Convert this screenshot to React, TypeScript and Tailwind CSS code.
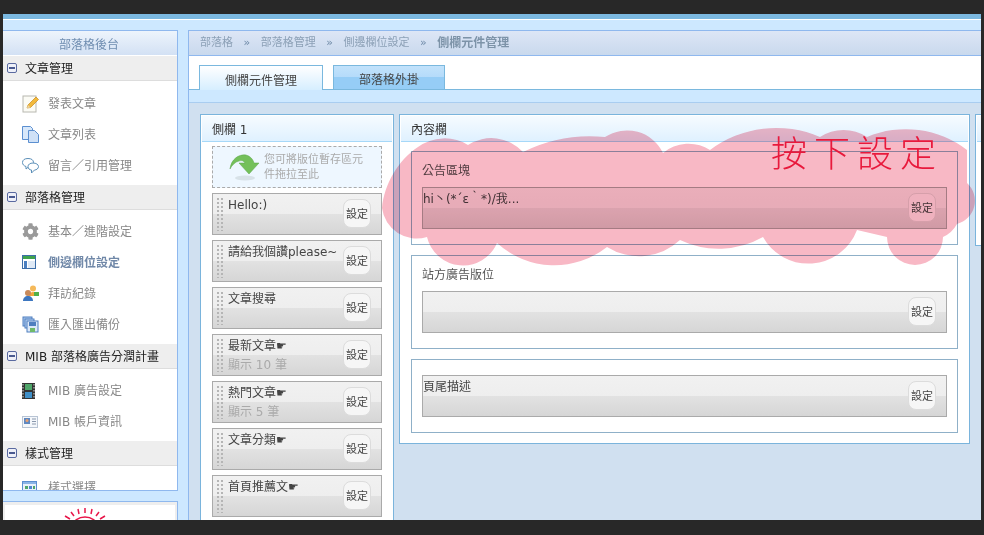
import React from 'react';
import { FaCog } from 'react-icons/fa';

const font = '[font-family:"DejaVu_Sans","Noto_Sans_CJK_TC",sans-serif]';

const PencilIcon = () => (
  <svg width="18" height="18" viewBox="0 0 18 18">
    <rect x="1" y="1" width="13" height="16" fill="#fbfbf5" stroke="#b8b8b0" />
    <path d="M5 13l1-3 8-8 2.500 2.500-8 8z" fill="#f2b93b" stroke="#c98a1c" strokeWidth="0.7" />
    <path d="M5 13l1-3 2.500 2.500z" fill="#e9d5a8" />
  </svg>
);
const DocsIcon = () => (
  <svg width="17" height="17" viewBox="0 0 17 17">
    <path d="M0.500 0.500h8l2 2v11h-10z" fill="#d8e8fa" stroke="#5b8fd0" />
    <path d="M6.500 4.500h6l4 4v8h-10z" fill="#cfe1f7" stroke="#5b8fd0" />
  </svg>
);
const BubblesIcon = () => (
  <svg width="17" height="16" viewBox="0 0 17 16">
    <path d="M0.500 4.500C0.500 2 2.500 0.500 6 0.500s5.500 1.500 5.500 4S9 8.500 7 8.500l-3 2.500V8.500C2 8 0.500 6.500 0.500 4.500z" fill="#fff" stroke="#5b8fb8" />
    <path d="M6 8.500C6 6.500 8 5 11 5s5.500 1.500 5.500 3.500-2 3.500-4 3.500l-3 3v-3C7.500 12 6 10.500 6 8.500z" fill="#fff" stroke="#5b8fb8" />
  </svg>
);
const LayoutIcon = () => (
  <svg width="16" height="16" viewBox="0 0 16 16">
    <rect x="0.500" y="0.500" width="13" height="13" fill="#fff" stroke="#3d6ea8" />
    <rect x="1" y="1" width="12" height="3" fill="#3fa34d" />
    <rect x="2" y="6" width="3" height="7" fill="#4a7fc0" />
    <rect x="6" y="6" width="7" height="7" fill="#dfe9f5" />
  </svg>
);
const UsersIcon = () => (
  <svg width="18" height="18" viewBox="0 0 18 18">
    <circle cx="11" cy="3.500" r="3" fill="#f5b95a" />
    <path d="M7 11c0-3 2-4 4-4s4 1 4 4z" fill="#f0a63c" />
    <circle cx="6" cy="8" r="3" fill="#c98a5a" />
    <path d="M1 16c0-3 2-5 5-5s5 2 5 5z" fill="#3d77c0" />
    <rect x="12" y="7" width="5" height="4" fill="#52b04a" />
  </svg>
);
const BackupIcon = () => (
  <svg width="17" height="17" viewBox="0 0 17 17">
    <rect x="1" y="1" width="9" height="9" fill="#a9c6ec" stroke="#4f7fbf" />
    <rect x="3" y="3" width="9" height="9" fill="#bcd4f2" stroke="#4f7fbf" />
    <rect x="5" y="5" width="11" height="11" fill="#dce9f8" stroke="#4f7fbf" />
    <rect x="7" y="6" width="7" height="4" fill="#4f7fbf" />
    <rect x="8" y="12" width="5" height="4" fill="#6fba6a" />
  </svg>
);
const FilmIcon = () => (
  <svg width="13" height="16" viewBox="0 0 13 16">
    <rect width="13" height="16" fill="#333" />
    <rect x="3" y="1" width="7" height="6" fill="#4fa66a" />
    <rect x="3" y="9" width="7" height="6" fill="#3f8fc8" />
    <path d="M1 1v14M12 1v14" stroke="#ddd" strokeWidth="1" strokeDasharray="1.500 1.500" />
  </svg>
);
const CardIcon = () => (
  <svg width="16" height="12" viewBox="0 0 16 12">
    <rect x="0.500" y="0.500" width="15" height="11" fill="#f4f7fb" stroke="#b8c4d4" />
    <rect x="2" y="2" width="6" height="6" fill="#5f88c0" />
    <circle cx="5" cy="4.500" r="1.500" fill="#e8a070" />
    <path d="M10 3h4M10 5.500h4M10 8h4" stroke="#8a98ac" />
  </svg>
);
const GridIcon = () => (
  <svg width="15" height="14" viewBox="0 0 15 14">
    <rect x="0.500" y="0.500" width="14" height="13" fill="#e8f1fb" stroke="#5b8fd0" />
    <rect x="1" y="1" width="13" height="2" fill="#8ab4e6" />
    <rect x="3" y="5" width="3" height="3" fill="#4fa66a" />
    <rect x="7" y="5" width="3" height="3" fill="#4f86d0" />
    <rect x="11" y="5" width="2" height="3" fill="#4fa66a" />
    <rect x="3" y="9" width="3" height="3" fill="#e0a030" />
    <rect x="7" y="9" width="3" height="3" fill="#4fa66a" />
    <rect x="11" y="9" width="2" height="3" fill="#e0a030" />
  </svg>
);

const menu = [
  {
    title: '文章管理',
    first: true,
    items: [
      { label: '發表文章', icon: <PencilIcon /> },
      { label: '文章列表', icon: <DocsIcon /> },
      { label: '留言／引用管理', icon: <BubblesIcon /> },
    ],
  },
  {
    title: '部落格管理',
    items: [
      { label: '基本／進階設定', icon: <FaCog size={17} color="#9a9a9a" /> },
      { label: '側邊欄位設定', icon: <LayoutIcon />, active: true },
      { label: '拜訪紀錄', icon: <UsersIcon /> },
      { label: '匯入匯出備份', icon: <BackupIcon /> },
    ],
  },
  {
    title: 'MIB 部落格廣告分潤計畫',
    items: [
      { label: 'MIB 廣告設定', icon: <FilmIcon /> },
      { label: 'MIB 帳戶資訊', icon: <CardIcon /> },
    ],
  },
  {
    title: '樣式管理',
    items: [{ label: '樣式選擇', icon: <GridIcon /> }],
  },
];

const sideWidgets = [
  { title: 'Hello:)' },
  { title: '請給我個讚please~' },
  { title: '文章搜尋' },
  { title: '最新文章☛', sub: '顯示 10 筆' },
  { title: '熱門文章☛', sub: '顯示 5 筆' },
  { title: '文章分類☛' },
  { title: '首頁推薦文☛' },
];

const SetButton = () => (
  <div className="ml-auto mt-[5px] flex h-[29px] w-[28px] shrink-0 items-center justify-center rounded-lg border border-[#dcdcdc] bg-[#f6f6f6] pt-[3px] text-[11px] text-[#444]">
    設定
  </div>
);

const Widget = ({ title, sub, grip }: { title: string; sub?: string; grip?: boolean }) => (
  <div className="flex h-[42px] border border-[#aaaaaa] bg-[linear-gradient(#f1f1f1_0,#eeeeee_50%,#e2e2e2_50%,#d6d6d6_100%)] pr-[10px]">
    {grip && (
      <div className="ml-[3px] mt-[3px] h-[34px] w-[8px] shrink-0 bg-[radial-gradient(circle,#b5b5b5_1px,transparent_1px)] bg-[length:4px_4px]" />
    )}
    <div className={grip ? 'ml-[4px] pt-[3px]' : 'pt-[3px]'}>
      <div className="whitespace-nowrap text-[12px] leading-[16px] text-[#444]">{title}</div>
      {sub && <div className="mt-[3px] whitespace-nowrap text-[12px] leading-[16px] text-[#aaaaaa]">{sub}</div>}
    </div>
    <SetButton />
  </div>
);

const ColumnHead = ({ title }: { title: string }) => (
  <div className="mx-px mt-px h-[26px] border-b border-[#a6d8f8] bg-[linear-gradient(#f6fbff,#dff1ff)] pl-[10px] text-[12px] leading-[28px] text-[#333]">
    {title}
  </div>
);

const Crumb = ({ children }: { children: string }) => <span>{children}</span>;

export default function App() {
  return (
    <div className={`relative h-[535px] w-[984px] overflow-hidden bg-[#282828] pl-[3px] pr-[3px] pt-[14px] ${font}`}>
      <div className="flex h-[506px] flex-col overflow-hidden">
        <div className="h-[6px] shrink-0 border-b border-white bg-[#7bb8e0]" />
        <div className="flex min-h-0 flex-1 gap-[10px] bg-[#cde8ff] pt-[10px]">
          {/* left menu */}
          <div className="flex w-[175px] shrink-0 flex-col gap-[10px]">
            <div className="h-[461px] shrink-0 overflow-hidden border-b border-r border-t border-[#8fb8ee] bg-white">
              <div className="h-[24px] bg-[linear-gradient(#edf4fc,#d3e1f4)] pr-[2px] text-center text-[12px] leading-[28px] text-[#6f8db0]">
                部落格後台
              </div>
              {menu.map((group) => (
                <div key={group.title}>
                  <div className={`${group.first ? 'mt-px' : ''} flex h-[25px] items-center border-b border-[#dddddd] bg-[#eeeeee] pl-[4px] pt-[2px] text-[12px] text-[#222]`}>
                    <span className="mb-[2px] mr-[8px] flex h-[10px] w-[10px] items-center justify-center rounded-[2px] border border-[#5a6aa0] bg-[#eef0f8]">
                      <span className="h-[2px] w-[6px] bg-[#4a5a90]" />
                    </span>
                    {group.title}
                  </div>
                  <div className={group.first ? 'pb-[4px] pt-[7px]' : 'pb-[4px] pt-[6px]'}>
                    {group.items.map((item) => (
                      <div key={item.label} className="flex h-[31px] items-center pl-[19px]">
                        <span className="flex w-[26px] shrink-0 items-center">{item.icon}</span>
                        <span className={item.active ? 'text-[12px] font-bold text-[#7088a8]' : 'text-[12px] text-[#888888]'}>
                          {item.label}
                        </span>
                      </div>
                    ))}
                  </div>
                </div>
              ))}
            </div>
            <div className="flex flex-1 justify-center border-r border-t border-[#8fb8ee] bg-[#eeeeee] pt-[3px]">
              <div className="flex w-[170px] justify-center bg-white pr-[10px] pt-[3px]">
                <svg width="50" height="14" viewBox="0 0 50 14" fill="none" stroke="#e8174a" strokeWidth="1.500">
                  <path d="M13 18a12 9 0 0 1 24 0" />
                  <path d="M25 0v5M18 1l1 5M32 1l-1 5M11 4l3 4M39 4l-3 4M5 8l5 3M45 8l-5 3" />
                </svg>
              </div>
            </div>
          </div>

          {/* main area */}
          <div className="flex min-w-0 flex-1 flex-col border-l border-[#8fb8ee]">
            <div className="flex h-[26px] shrink-0 items-center border-b border-t border-[#8fb8ee] bg-[linear-gradient(#dde6f6,#c9d9ed)] pl-[11px] text-[11px] text-[#8ca0b6]">
              <Crumb>部落格</Crumb>
              <span className="mx-[10.5px] text-[#6f8aa8]">»</span>
              <Crumb>部落格管理</Crumb>
              <span className="mx-[10.5px] text-[#6f8aa8]">»</span>
              <Crumb>側邊欄位設定</Crumb>
              <span className="mx-[10.5px] text-[#6f8aa8]">»</span>
              <span className="text-[12px] font-bold text-[#7d93a8]">側欄元件管理</span>
            </div>
            <div className="flex h-[34px] shrink-0 items-end gap-[10px] border-b border-[#7ab8de] bg-white pl-[10px]">
              <div className="-mb-px h-[25px] w-[124px] border border-b-0 border-[#7ab8de] bg-[linear-gradient(#ffffff,#d6eeff)] text-center text-[12px] leading-[30px] text-[#444]">
                側欄元件管理
              </div>
              <div className="h-[24px] w-[112px] border border-b-0 border-[#7ab8de] bg-[linear-gradient(#c2e2fb_0,#b4dbfa_50%,#96cdf6_50%,#96cdf6_100%)] text-center text-[12px] leading-[28px] text-[#444]">
                部落格外掛
              </div>
            </div>
            <div className="h-[13px] shrink-0 border-b border-[#a9cdf0] bg-[#cde8ff]" />
            <div className="flex min-h-0 flex-1 items-start gap-[5px] overflow-hidden bg-[#d0e0f0] pl-[11px] pt-[11px]">
              <div className="w-[194px] shrink-0 border border-[#7ab4dc] bg-white pb-[20px]">
                <ColumnHead title="側欄 1" />
                <div className="flex flex-col gap-[5px] px-[11px] pt-[4px]">
                  <div className="flex h-[42px] items-center border border-dashed border-[#aaaaaa] bg-[#eef7ff] pl-[16px] text-[11px] leading-[15px] text-[#aaaaaa]">
                    <svg width="32" height="28" viewBox="0 0 32 28" className="mr-[3px] shrink-0">
                      <ellipse cx="16" cy="25" rx="10" ry="2.500" fill="#d8e2e8" />
                      <path d="M1 16C2 6 10 1 17 2c4 1 7 4 8 8h5L20 21 10 10h6c-1-2-3-3-6-2-4 1-7 4-9 8z" fill="#74c05a" stroke="#5aa548" strokeWidth="0.500" />
                    </svg>
                    <span className="w-[104px]">您可將版位暫存區元件拖拉至此</span>
                  </div>
                  {sideWidgets.map((w) => (
                    <Widget key={w.title} title={w.title} sub={w.sub} grip />
                  ))}
                </div>
              </div>

              <div className="w-[571px] shrink-0 border border-[#7ab4dc] bg-white pb-[10px]">
                <ColumnHead title="內容欄" />
                <div className="flex flex-col gap-[10px] px-[11px] pt-[9px]">
                  <div className="border border-[#8fb0c8] px-[10px] pb-[15px] pt-[12px]">
                    <div className="mb-[8px] text-[12px] leading-[15px] text-[#555]">公告區塊</div>
                    <Widget title="hi丶(*´ε｀*)/我..." />
                  </div>
                  <div className="border border-[#8fb0c8] px-[10px] pb-[15px] pt-[12px]">
                    <div className="mb-[8px] text-[12px] leading-[15px] text-[#555]">站方廣告版位</div>
                    <Widget title="" />
                  </div>
                  <div className="border border-[#8fb0c8] px-[10px] pb-[15px] pt-[15px]">
                    <Widget title="頁尾描述" />
                  </div>
                </div>
              </div>

              <div className="h-[132px] w-[40px] shrink-0 border border-[#7ab4dc] bg-white">
                <div className="mx-px mt-px h-[26px] border-b border-[#a6d8f8] bg-[linear-gradient(#f6fbff,#dff1ff)]" />
              </div>
            </div>
          </div>
        </div>
      </div>

      {/* pink brush annotation painted over the page */}
      <svg width="984" height="535" viewBox="0 0 984 535" className="pointer-events-none absolute left-0 top-0 mix-blend-multiply">
        <path
          fill="#f8b8c5"
          d="M382 208C384 185 398 160 418 147A45 45 0 0 1 468 145A43 43 0 0 1 523 152A150 150 0 0 1 605 137A40 40 0 0 1 663 153A40 40 0 0 1 710 150A110 110 0 0 1 820 137A43 43 0 0 1 867 137A100 100 0 0 1 967 150L967 183A24 24 0 0 1 957 224A30 30 0 0 1 943 237A28 28 0 0 1 887 237L857 230A52 52 0 0 1 763 237A90 90 0 0 1 680 240A60 60 0 0 1 607 247A85 85 0 0 1 497 243A37 37 0 0 1 427 237A35 35 0 0 1 382 208Z"
        />
      </svg>
      <div className="absolute left-[771px] top-[134px] whitespace-nowrap text-[36px] font-light leading-[42px] tracking-[7px] text-[#e8193c]">
        按下設定
      </div>
    </div>
  );
}
